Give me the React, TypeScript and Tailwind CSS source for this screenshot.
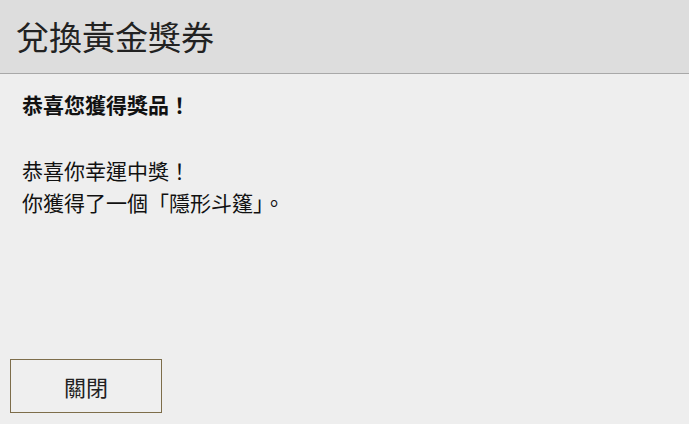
export default function App() {
  return (
    <div
      className="flex h-[424px] w-[689px] flex-col bg-[#eeeeee] text-[#111]"
      style={{ fontFamily: '"Noto Sans CJK TC", "Noto Sans CJK SC", sans-serif' }}
    >
      <header className="flex h-[74px] shrink-0 items-center border-b border-[#a8a8a8] bg-[#dddddd] px-4">
        <h1 className="text-[33px] font-normal leading-none text-[#222]">兌換黃金獎券</h1>
      </header>
      <div className="flex-1 px-[22px] pt-[14px] text-[21px] leading-[32px]">
        <p className="font-bold">恭喜您獲得獎品！</p>
        <p className="mt-[34px]">恭喜你幸運中獎！</p>
        <p>你獲得了一個「隱形斗篷」。</p>
      </div>
      <div className="px-[10px] pb-[11px]">
        <button className="h-[54px] w-[152px] border border-[#7d6d4a] bg-[#efefef] text-[22px] text-[#222]">
          關閉
        </button>
      </div>
    </div>
  )
}
